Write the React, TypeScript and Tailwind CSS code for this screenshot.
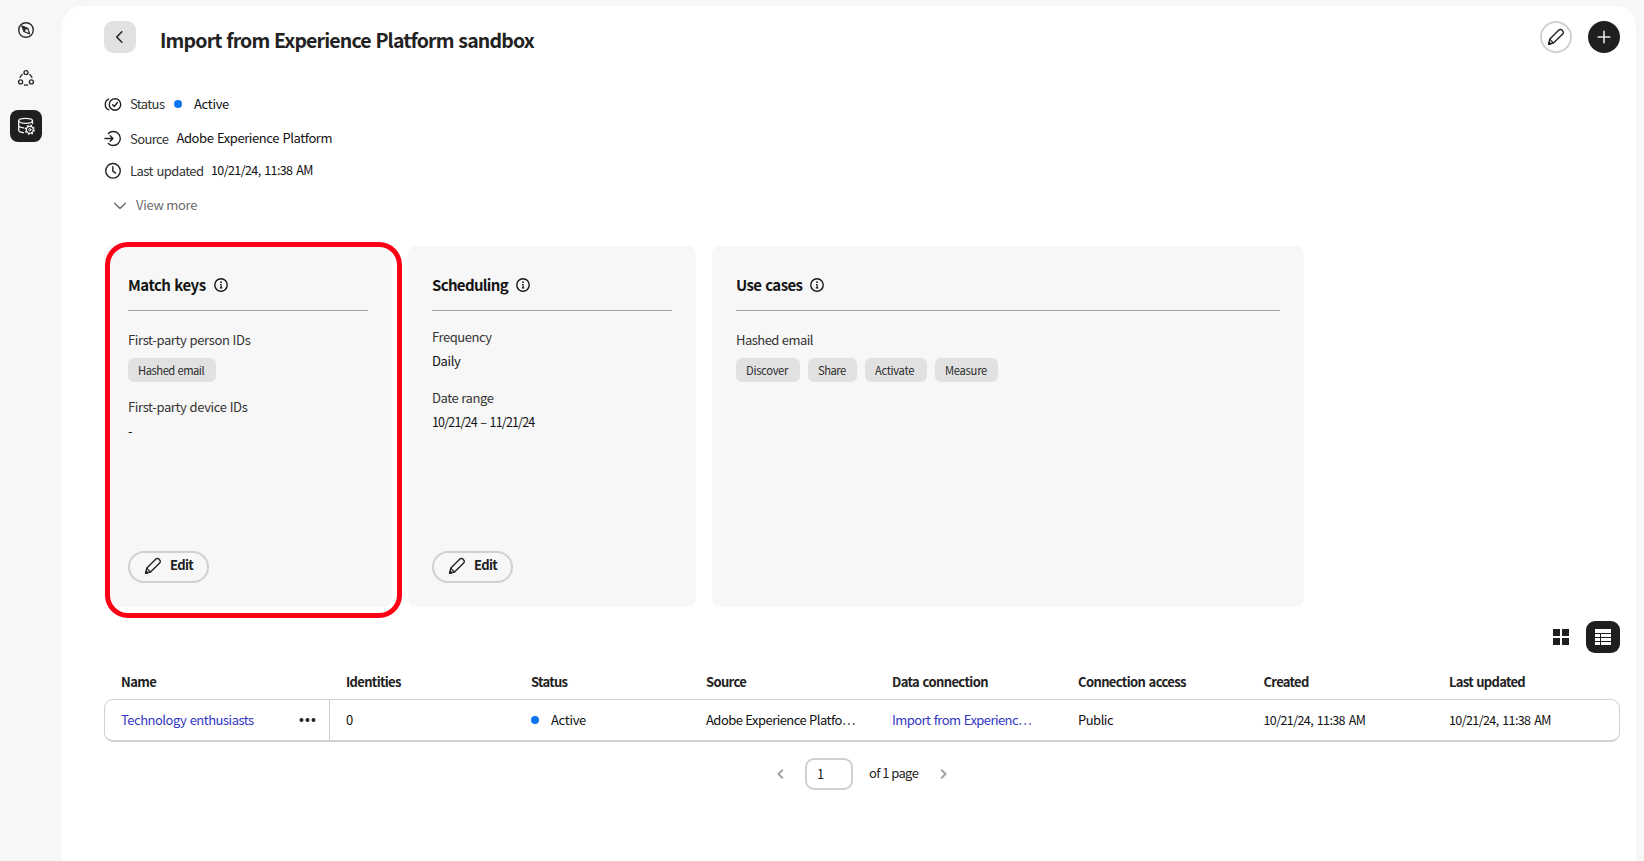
import type { ReactNode } from "react";

function Icon({ size = 20, className = "", children }: { size?: number; className?: string; children: ReactNode }) {
  return (
    <svg width={size} height={size} viewBox={`0 0 ${size} ${size}`} fill="none" stroke="currentColor" strokeWidth="1.4" strokeLinecap="round" strokeLinejoin="round" className={"shrink-0 " + className}>
      {children}
    </svg>
  );
}

const Pencil = ({ className = "" }: { className?: string }) => (
  <Icon className={className}>
    <path d="M3.9 12 12.9 3.100a2.100 2.100 0 0 1 3 0l.800.800a2.100 2.100 0 0 1 0 3L7.700 15.800 2.600 17.200Z" />
    <path d="M3.900 12.400 7.400 15.900" strokeWidth="1.2" />
    <path d="M2.600 17.200l.600-2 1.500 1.500Z" fill="currentColor" />
  </Icon>
);

const Info = () => (
  <Icon size={16} className="mb-px">
    <circle cx="8" cy="8" r="6.2" strokeWidth="1.4" />
    <circle cx="8" cy="5.2" r="0.9" fill="currentColor" stroke="none" />
    <path d="M7 7.5h1.1v3M6.8 10.8h2.5" strokeWidth="1.15" strokeLinecap="butt" />
  </Icon>
);

function Sidebar() {
  return (
    <nav className="flex w-[62px] shrink-0 flex-col pt-[14px] pl-[10px] text-[#2c2c2c]">
      <div className="flex size-8 items-center justify-center">
        <Icon>
          <circle cx="10" cy="10" r="7.3" strokeWidth="1.4" />
          <path d="M6 6 12 8.600 13.700 13.900 8.300 11.700Z" strokeWidth="1.2" />
          <path d="M6 6 12 8.600 8.300 11.700Z" fill="currentColor" strokeWidth="0.8" />
          <circle cx="10.200" cy="10.200" r="0.900" fill="#f7f7f7" stroke="none" />
        </Icon>
      </div>
      <div className="mt-4 flex size-8 items-center justify-center">
        <Icon>
          <circle cx="10" cy="4.6" r="2" />
          <circle cx="4.6" cy="13.9" r="2" />
          <circle cx="15.4" cy="13.9" r="2" />
          <path d="M6.200 6.500A7 7 0 0 0 4.100 9.300M13.800 6.500a7 7 0 0 1 2.100 2.800M8.500 17q1.500.3 3 0" />
        </Icon>
      </div>
      <div className="mt-4 flex size-8 items-center justify-center rounded-[8px] bg-[#1f1f1f] text-[#f2f2f2]">
        <Icon>
          <ellipse cx="9.6" cy="4.8" rx="6.9" ry="2.5" strokeWidth="1.3" />
          <path d="M2.7 4.8v9.4c0 1.2 2 2.1 4.8 2.4M16.5 4.8v2.7M2.7 9.6c0 1.2 2.2 2.1 5 2.3" strokeWidth="1.3" />
          <circle cx="13.8" cy="13.7" r="3.4" strokeWidth="1.2" />
          <circle cx="13.8" cy="13.7" r="1.1" strokeWidth="1" />
          <circle cx="13.8" cy="13.7" r="4.4" strokeWidth="1.5" strokeDasharray="1.7 1.755" strokeLinecap="butt" />
        </Icon>
      </div>
    </nav>
  );
}

const Dot = () => <span className="size-2 shrink-0 rounded-full bg-[#0d73ee]" />;

function Header() {
  return (
    <header className="flex h-8 items-center">
      <button className="flex size-8 items-center justify-center rounded-[9px] bg-[#e1e1e1]">
        <Icon>
          <path d="M11.9 4.7 6.7 10l5.2 5.3" strokeWidth="1.5" />
        </Icon>
      </button>
      <h1 className="ml-6 pt-[6px] text-[19.5px] leading-7 font-bold tracking-[-0.84px] [word-spacing:1px]">Import from Experience Platform sandbox</h1>
      <button className="ml-auto flex size-8 items-center justify-center rounded-full border-2 border-[#d0d0d0]">
        <Pencil />
      </button>
      <button className="ml-4 flex size-8 items-center justify-center rounded-full bg-[#1f1f1f] text-[#e4e4e4]">
        <Icon>
          <path d="M10 4.2v11.6M4.2 10h11.6" strokeWidth="1.6" />
        </Icon>
      </button>
    </header>
  );
}

function Details() {
  return (
    <section className="mt-[41px] text-[13px] leading-5 text-[#333]">
      <div className="flex h-5 items-center">
        <Icon size={18} className="-mt-px -mr-0.5 text-[#222]">
          <circle cx="11" cy="9.500" r="5.700" />
          <path d="M8.600 9.700l1.700 1.800 3.100-4M4.700 4.100C2.400 5 1.300 7 1.300 9.500s1.100 4.500 3.400 5.400" />
        </Icon>
        <span className="ml-2.5 w-[44px] tracking-[-0.6px]">Status</span>
        <Dot />
        <span className="ml-[12px] tracking-[-0.3px] text-[#111]">Active</span>
      </div>
      <div className="mt-[15px] flex h-5 items-center">
        <Icon size={18} className="-mt-0.5 -mr-0.5 text-[#222]">
          <path d="M4.300 4.600a7 7 0 1 1 0 9.800M.9 9.500H9M6.200 6.700 9 9.500l-2.800 2.800" />
        </Icon>
        <span className="ml-2.5 w-[46.5px] tracking-[-0.6px]">Source</span>
        <span className="-mt-[2px] tracking-[-0.42px] text-[#111] [word-spacing:1px]">Adobe Experience Platform</span>
      </div>
      <div className="mt-[12px] flex h-5 items-center">
        <Icon size={18} className="-mt-0.5 -mr-0.5 text-[#222]">
          <circle cx="9" cy="9.800" r="7.300" />
          <path d="M8.800 5.600v4.500l2.800 2" />
        </Icon>
        <span className="ml-2.5 w-[81px] tracking-[-0.6px] [word-spacing:1.5px]">Last updated</span>
        <span className="-mt-[2px] text-[12.5px] tracking-[-0.6px] text-[#111] [word-spacing:1.5px]">10/21/24, 11:38 AM</span>
      </div>
      <div className="mt-[14px] flex h-5 items-center text-[#6b6b6b]">
        <Icon className="ml-[6px]">
          <path d="M4.600 8.300 10 13.400l5.400-5.100" />
        </Icon>
        <span className="ml-1.5 tracking-[-0.28px]">View more</span>
      </div>
    </section>
  );
}

function Card({ title, className, children, edit, highlight }: { title: ReactNode; className: string; children: ReactNode; edit?: boolean; highlight?: boolean }) {
  return (
    <article className={"relative flex h-[361px] flex-col rounded-[8px] bg-[#f7f7f7] px-6 pt-[27px] pb-6 " + className}>
      <h2 className="flex h-6 items-center gap-[7px] text-[15px] leading-6 font-bold text-[#151515]">
        {title}
        <Info />
      </h2>
      <hr className="mt-[13px] border-[#a3a3a3]" />
      <div className="text-[13px] leading-5 text-[#333]">{children}</div>
      {edit && (
        <button className="mt-auto flex h-8 w-[81px] items-center rounded-full border-2 border-[#d0d0d0] pl-[13px] text-[13px] font-bold tracking-[-0.66px] text-[#222]">
          <Pencil className="-mt-0.5" />
          <span className="-mt-1 ml-[7px]">Edit</span>
        </button>
      )}
      {highlight && <span className="absolute top-[-4.5px] left-[0.5px] h-[376px] w-[297px] rounded-[23px] border-[5px] border-[#fe0016]" />}
    </article>
  );
}

const Chip = ({ className, children }: { className: string; children: ReactNode }) => (
  <span className={"flex h-6 items-center rounded-[6px] bg-[#e1e1e1] pb-px pl-2.5 text-[11.2px] whitespace-nowrap text-[#2c2c2c] " + className}>{children}</span>
);

function Cards() {
  return (
    <section className="mt-[31px] flex gap-4">
      <Card title={<span className="tracking-[-0.5px] [word-spacing:1px]">Match keys</span>} className="w-[288px]" edit highlight>
        <p className="mt-[19px] tracking-[-0.36px] [word-spacing:0.5px]">First-party person IDs</p>
        <Chip className="mt-[8px] w-[88px] tracking-[-0.46px] [word-spacing:0.5px]">Hashed email</Chip>
        <p className="mt-[15px] tracking-[-0.36px] [word-spacing:0.5px]">First-party device IDs</p>
        <p className="mt-1 text-[#111]">-</p>
      </Card>
      <Card title={<span className="tracking-[-0.67px]">Scheduling</span>} className="w-[288px]" edit>
        <p className="mt-4 tracking-[-0.45px]">Frequency</p>
        <p className="mt-1 tracking-[-0.36px] text-[#111]">Daily</p>
        <p className="mt-[17px] tracking-[-0.42px] [word-spacing:0.5px]">Date range</p>
        <p className="mt-1 text-[12.5px] tracking-[-0.83px] text-[#111] [word-spacing:1.5px]">10/21/24 – 11/21/24</p>
      </Card>
      <Card title={<span className="tracking-[-0.6px] [word-spacing:1px]">Use cases</span>} className="w-[592px]">
        <p className="mt-[19px] tracking-[-0.53px] [word-spacing:0.5px]">Hashed email</p>
        <div className="mt-[8px] flex gap-2">
          <Chip className="w-16 tracking-[-0.31px]">Discover</Chip>
          <Chip className="w-[49px] tracking-[-0.5px]">Share</Chip>
          <Chip className="w-[62px] tracking-[-0.33px]">Activate</Chip>
          <Chip className="w-[63px] tracking-[-0.26px]">Measure</Chip>
        </div>
      </Card>
    </section>
  );
}

function ViewToggle() {
  return (
    <div className="mt-[14px] flex h-8 items-center justify-end gap-[17px]">
      <svg width="16" height="16" viewBox="0 0 16 16" fill="#1f1f1f">
        <path d="M0 0h7v7H0zM9 0h7v7H9zM0 9h7v7H0zM9 9h7v7H9z" />
      </svg>
      <button className="flex h-8 w-[34px] items-center justify-center rounded-[9px] bg-[#1f1f1f]">
        <svg width="16" height="16" viewBox="0 0 16 16" fill="#fff">
          <path d="M0 0h16v4H0zM0 5h5v3H0zM6 5h10v3H6zM0 9h5v3H0zM6 9h10v3H6zM0 13h5v3H0zM6 13h10v3H6z" />
        </svg>
      </button>
    </div>
  );
}

function DataTable() {
  return (
    <section className="text-[13px] leading-5 whitespace-nowrap">
      <div className="grid h-[46px] grid-cols-[226px_185px_175px_186px_186px_185.5px_185.5px_1fr] pt-[19px] font-bold *:pl-4">
        <span className="ml-px tracking-[-0.6px]">Name</span>
        <span className="tracking-[-0.67px]">Identities</span>
        <span className="tracking-[-0.7px]">Status</span>
        <span className="tracking-[-0.65px]">Source</span>
        <span className="tracking-[-0.6px] [word-spacing:1px]">Data connection</span>
        <span className="tracking-[-0.62px] [word-spacing:1px]">Connection access</span>
        <span className="tracking-[-0.7px]">Created</span>
        <span className="tracking-[-0.7px] [word-spacing:1px]">Last updated</span>
      </div>
      <div className="grid h-[43px] grid-cols-[225px_185px_175px_186px_186px_185.5px_185.5px_1fr] items-center rounded-[9px] border border-b-2 border-[#d0d0d0] text-[#111] *:pl-4">
        <div className="flex h-full items-center justify-between border-r border-[#d0d0d0] pr-[13px] tracking-[-0.5px] text-[#3236c3] [word-spacing:1px]">
          <span>Technology enthusiasts</span>
          <svg width="18" height="6" viewBox="0 0 18 6" fill="#222">
            <circle cx="3.500" cy="3" r="2" />
            <circle cx="9.500" cy="3" r="2" />
            <circle cx="15.500" cy="3" r="2" />
          </svg>
        </div>
        <span>0</span>
        <div className="flex items-center gap-3">
          <Dot />
          <span className="tracking-[-0.3px]">Active</span>
        </div>
        <span className="tracking-[-0.53px] [word-spacing:0.5px]">Adobe Experience Platfo…</span>
        <span className="tracking-[-0.57px] text-[#3236c3] [word-spacing:1px]">Import from Experienc…</span>
        <span className="tracking-[-0.5px]">Public</span>
        <span className="text-[12.5px] tracking-[-0.6px] [word-spacing:1.5px]">10/21/24, 11:38 AM</span>
        <span className="text-[12.5px] tracking-[-0.6px] [word-spacing:1.5px]">10/21/24, 11:38 AM</span>
      </div>
      <div className="mt-4 ml-[669px] flex h-8 items-center text-[#222]">
        <Icon size={14} className="text-[#a3a3a3]">
          <path d="M9.300 3.300 5.400 7l3.900 3.700" strokeWidth="2" />
        </Icon>
        <div className="ml-[18px] flex h-8 w-12 items-center rounded-[9px] border-2 border-[#d0d0d0] pb-px pl-[10px]">1</div>
        <span className="-mt-0.5 ml-4 w-[68px] tracking-[-0.6px]">of 1 page</span>
        <Icon size={14} className="text-[#a3a3a3]">
          <path d="M4.700 3.300 8.600 7l-3.900 3.700" strokeWidth="2" />
        </Icon>
      </div>
    </section>
  );
}

export default function App() {
  return (
    <div className="flex h-screen overflow-hidden bg-[#f7f7f7] pr-2 font-['Noto_Sans_CJK_SC',sans-serif] text-[#222]">
      <Sidebar />
      <main className="mt-1.5 flex-1 rounded-t-[20px] bg-white pt-[15px] pr-4 pl-[42px]">
        <Header />
        <Details />
        <Cards />
        <ViewToggle />
        <DataTable />
      </main>
    </div>
  );
}
